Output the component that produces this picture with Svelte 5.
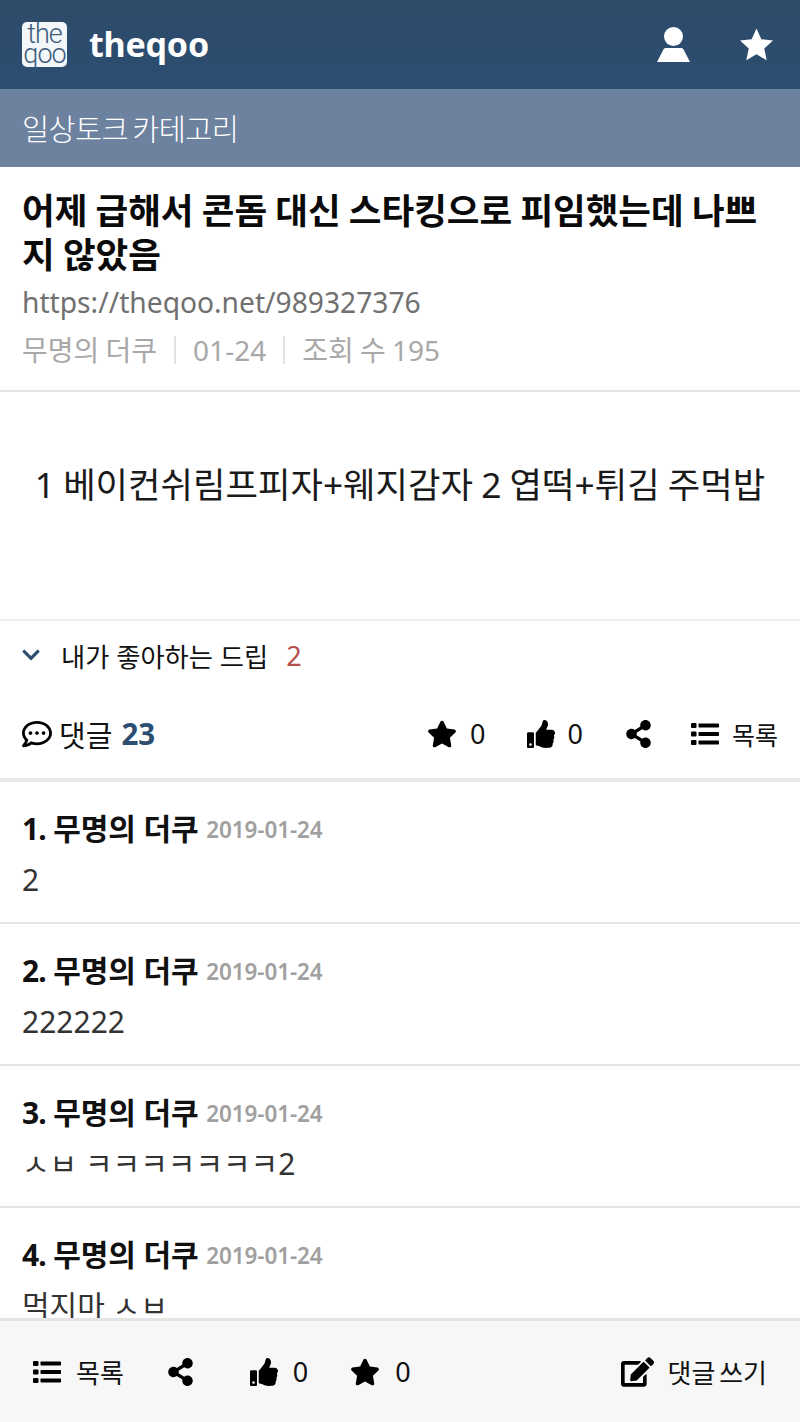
<script>
	const comments = [
		{ no: 1, body: '2' },
		{ no: 2, body: '222222' },
		{ no: 3, body: 'ㅅㅂ ㅋㅋㅋㅋㅋㅋㅋ2' },
		{ no: 4, body: '먹지마 ㅅㅂ' }
	];

	const star = 'M259.3 17.8L194 150.2 47.9 171.5c-26.2 3.8-36.7 36.1-17.7 54.6l105.7 103-25 145.5c-4.5 26.3 23.2 46 46.4 33.7L288 439.6l130.7 68.7c23.2 12.2 50.9-7.4 46.4-33.7l-25-145.5 105.7-103c19-18.5 8.5-50.8-17.7-54.6L382 150.2 316.7 17.8c-11.7-23.6-45.6-23.9-57.4 0z';
	const thumb = 'M104 224H24c-13.255 0-24 10.745-24 24v240c0 13.255 10.745 24 24 24h80c13.255 0 24-10.745 24-24V248c0-13.255-10.745-24-24-24zM64 472c-13.255 0-24-10.745-24-24s10.745-24 24-24 24 10.745 24 24-10.745 24-24 24zM384 81.452c0 42.416-25.97 66.208-33.277 94.548h101.723c33.397 0 59.397 27.746 59.553 58.098.084 17.938-7.546 37.249-19.439 49.197l-.11.11c9.836 23.337 8.237 56.037-9.308 79.469 8.681 25.895-.069 57.704-16.382 74.757 4.298 17.598 2.244 32.575-6.148 44.632C440.202 511.587 389.616 512 346.839 512l-2.845-.001c-48.287-.017-87.806-17.598-119.56-31.725-15.957-7.099-36.821-15.887-52.651-16.178-6.54-.12-11.783-5.457-11.783-11.998v-213.77c0-3.2 1.282-6.271 3.558-8.521 39.614-39.144 56.648-80.587 89.117-113.111 14.804-14.832 20.188-37.236 25.393-58.902C282.515 39.293 291.817 0 312 0c24 0 72 8 72 81.452z';
	const share = 'M352 320c-22.608 0-43.387 7.819-59.79 20.895l-102.486-64.054a96.551 96.551 0 0 0 0-41.683l102.486-64.054C308.613 184.181 329.392 192 352 192c53.019 0 96-42.981 96-96S405.019 0 352 0s-96 42.981-96 96c0 7.158.79 14.13 2.276 20.841L155.79 180.895C139.387 167.819 118.608 160 96 160c-53.019 0-96 42.981-96 96s42.981 96 96 96c22.608 0 43.387-7.819 59.79-20.895l102.486 64.054A96.301 96.301 0 0 0 256 416c0 53.019 42.981 96 96 96s96-42.981 96-96-42.981-96-96-96z';
	const edit = 'M402.6 83.2l90.2 90.2c3.8 3.8 3.8 10 0 13.8L274.4 405.6l-92.8 10.3c-12.4 1.4-22.9-9.1-21.5-21.5l10.3-92.8L388.8 83.2c3.8-3.8 10-3.8 13.8 0zm162-22.9l-48.8-48.8c-15.2-15.2-39.9-15.2-55.2 0l-35.4 35.4c-3.8 3.8-3.8 10 0 13.8l90.2 90.2c3.8 3.8 10 3.8 13.8 0l35.4-35.4c15.2-15.3 15.2-40 0-55.2zM384 346.2V448H64V128h229.8c3.2 0 6.2-1.3 8.5-3.5l40-40c7.6-7.6 2.2-20.5-8.5-20.5H48C21.5 64 0 85.5 0 112v352c0 26.5 21.5 48 48 48h352c26.5 0 48-21.5 48-48V306.2c0-10.7-12.9-16-20.5-8.5l-40 40c-2.2 2.3-3.5 5.3-3.5 8.5z';
	const dots = 'M144 208c-17.7 0-32 14.3-32 32s14.3 32 32 32 32-14.3 32-32-14.3-32-32-32zm112 0c-17.7 0-32 14.3-32 32s14.3 32 32 32 32-14.3 32-32-14.3-32-32-32zm112 0c-17.7 0-32 14.3-32 32s14.3 32 32 32 32-14.3 32-32-14.3-32-32-32zM256 32C114.6 32 0 125.1 0 240c0 47.6 19.9 91.2 52.9 126.3C38 405.7 7 439.1 6.5 439.5c-6.6 7-8.4 17.2-4.6 26S14.4 480 24 480c61.5 0 110-25.7 139.1-46.3C192 442.8 223.2 448 256 448c141.4 0 256-93.1 256-208S397.4 32 256 32zm0 368c-26.7 0-53.1-4.1-78.4-12.1l-22.7-7.2-19.5 13.8c-14.3 10.1-33.9 21.4-57.5 29 7.3-12.1 14.4-25.7 19.9-40.2l10.6-28.1-20.6-21.8C69.7 314.1 48 282.2 48 240c0-88.2 93.3-160 208-160s208 71.8 208 160-93.3 160-208 160z';
	const chevron = 'M207.029 381.476L12.686 187.132c-9.373-9.373-9.373-24.569 0-33.941l22.667-22.667c9.357-9.357 24.522-9.375 33.901-.04L224 284.505l154.745-154.021c9.379-9.335 24.544-9.317 33.901.04l22.667 22.667c9.373 9.373 9.373 24.569 0 33.941L240.971 381.476c-9.373 9.372-24.569 9.372-33.942 0z';
	const rows = [0, 8.5, 17];
</script>

{#snippet listIcon()}
	<svg class="list" viewBox="0 0 28 22">
		{#each rows as y}
			<rect x="0" {y} width="5.500" height="5" rx="1" />
			<rect x="7.500" y={y + 0.5} width="20.500" height="4" rx="0.8" />
		{/each}
	</svg>
{/snippet}

<div class="page">
	<header class="top">
		<div class="brand">
			<div class="logo"><span>the</span><span>qoo</span></div>
			<span class="name">theqoo</span>
		</div>
		<div class="top-icons">
			<svg class="user" viewBox="0 0 33 35"><circle cx="16.500" cy="9.500" r="9.500" /><path d="M9 21h15c1.300 0 2.200.6 2.700 1.800L33 35H0L6.300 22.800C6.800 21.600 7.700 21 9 21z" /></svg>
			<svg class="hstar" viewBox="0 0 34 33"><path d="M17 0l5 11 12 1.500-9 8.200 2.500 12L17 26.500 6.500 32.700 9 20.700 0 12.500 12 11z" /></svg>
		</div>
	</header>
	<div class="category">일상토크 카테고리</div>

	<div class="scroll">
		<section class="head">
			<h1>어제 급해서 콘돔 대신 스타킹으로 피임했는데 나쁘지 않았음</h1>
			<div class="url">https://theqoo.net/989327376</div>
			<div class="meta">
				<span>무명의 더쿠</span>
				<i></i>
				<span>01-24</span>
				<i></i>
				<span>조회 수 195</span>
			</div>
		</section>

		<article class="content">1 베이컨쉬림프피자+웨지감자 2 엽떡+튀김 주먹밥</article>

		<div class="related">
			<svg class="chev" viewBox="0 0 448 512"><path d={chevron} /></svg>
			<span>내가 좋아하는 드립</span>
			<b>2</b>
		</div>

		<div class="actions">
			<div class="count">
				<svg class="ico dots" viewBox="0 0 512 512"><path d={dots} /></svg>
				<span>댓글</span>
				<b>23</b>
			</div>
			<div class="tools">
				<span class="tool"><svg class="ico" viewBox="0 0 576 512"><path d={star} /></svg>0</span>
				<span class="tool t-thumb"><svg class="ico narrow" viewBox="0 0 512 512"><path d={thumb} /></svg>0</span>
				<span class="tool t-share"><svg class="ico share" viewBox="0 0 448 512"><path d={share} /></svg></span>
				<span class="tool t-list">{@render listIcon()}<em>목록</em></span>
			</div>
		</div>

		<ul class="comments">
			{#each comments as c}
				<li>
					<div class="who"><b><span class="no">{c.no}.</span> 무명의 더쿠</b> <time>2019-01-24</time></div>
					<div class="body">{c.body}</div>
				</li>
			{/each}
		</ul>
	</div>

	<footer class="bottom">
		<div class="left">
			<span class="tool">{@render listIcon()}<em>목록</em></span>
			<span class="tool b-share"><svg class="ico share" viewBox="0 0 448 512"><path d={share} /></svg></span>
			<span class="tool b-thumb"><svg class="ico narrow" viewBox="0 0 512 512"><path d={thumb} /></svg>0</span>
			<span class="tool b-star"><svg class="ico" viewBox="0 0 576 512"><path d={star} /></svg>0</span>
		</div>
		<span class="tool write"><svg class="ico pen" viewBox="0 0 576 512"><path d={edit} /></svg><em>댓글 쓰기</em></span>
	</footer>
</div>

<style>
	:global(body) {
		margin: 0;
		background: #fff;
	}

	.page {
		height: 1422px;
		display: flex;
		flex-direction: column;
		overflow: hidden;
		font-family: "Noto Sans", "Noto Sans CJK KR", sans-serif;
		color: #111;
	}

	.top {
		height: 89px;
		flex: none;
		background: linear-gradient(#2e4a68, #2c4e72);
		display: flex;
		align-items: center;
		justify-content: space-between;
		padding: 0 27px 0 22px;
	}

	.brand {
		display: flex;
		align-items: center;
		gap: 22px;
	}

	.logo {
		width: 45px;
		height: 45px;
		box-sizing: border-box;
		padding-top: 2px;
		border-radius: 5px;
		background: #f4f7f9;
		color: #3d5c7c;
		display: flex;
		flex-direction: column;
		align-items: center;
		font-family: "Roboto", sans-serif;
		font-weight: 300;
		font-size: 27px;
		line-height: 20px;
		letter-spacing: -1px;
	}

	.name {
		font-weight: 700;
		font-size: 34px;
		line-height: 45px;
		color: #fff;
		letter-spacing: -0.2px;
	}

	.top-icons {
		display: flex;
		align-items: center;
		gap: 50px;
	}

	.top-icons svg {
		fill: #fff;
		display: block;
	}

	.user {
		width: 33px;
		height: 35px;
	}

	.hstar {
		width: 33px;
		height: 33px;
	}

	.category {
		height: 78px;
		flex: none;
		box-sizing: border-box;
		background: #6d829f;
		color: #fff;
		font-size: 29.500px;
		font-weight: 300;
		line-height: 76px;
		padding: 2px 0 0 22px;
		letter-spacing: -0.6px;
		word-spacing: -3px;
	}

	.scroll {
		flex: 1;
		min-height: 0;
		overflow: hidden;
	}

	.head {
		padding: 21px 22px 20px;
		border-bottom: 2px solid #e5e5e5;
	}

	h1 {
		margin: 0;
		font-size: 35.500px;
		line-height: 44px;
		font-weight: 700;
		color: #0a0a0a;
		word-break: break-all;
		word-spacing: -1px;
	}

	.url {
		font-size: 28.200px;
		line-height: 40px;
		margin-top: 6px;
		color: #707070;
		font-weight: 400;
	}

	.meta {
		display: flex;
		align-items: center;
		gap: 17px;
		margin-top: 8px;
		font-size: 28px;
		line-height: 40px;
		font-weight: 400;
		color: #a8a8a8;
		word-spacing: -1px;
	}

	.meta i {
		width: 2px;
		height: 28px;
		background: #e2e2e2;
	}

	.content {
		height: 229px;
		box-sizing: border-box;
		border-bottom: 2px solid #eee;
		padding-top: 68px;
		text-align: center;
		font-size: 35.300px;
		line-height: 48px;
		font-weight: 400;
		color: #1a1a1a;
		word-spacing: -1px;
	}

	.related {
		height: 70px;
		box-sizing: border-box;
		padding: 0 0 2px 22px;
		display: flex;
		align-items: center;
		font-size: 26.300px;
		font-weight: 400;
	}

	.chev {
		width: 18px;
		height: 20px;
		fill: #2c4e70;
		margin-right: 21px;
	}

	.related b {
		font-weight: 400;
		color: #b5504c;
		margin-left: 18px;
		font-size: 27px;
	}

	.actions {
		height: 91px;
		box-sizing: border-box;
		border-bottom: 4px solid #e8e8e8;
		display: flex;
		align-items: center;
		justify-content: space-between;
		padding: 0 22px 2px;
	}

	.count {
		display: flex;
		align-items: center;
		font-size: 29px;
		font-weight: 400;
	}

	.count b {
		color: #2c4e70;
		font-weight: 700;
		margin-left: 9px;
		font-size: 29.500px;
	}

	.dots {
		margin-right: 7px;
	}

	.tools {
		display: flex;
		align-items: center;
	}

	.tool {
		display: inline-flex;
		align-items: center;
		gap: 13px;
		font-size: 27px;
		font-weight: 400;
	}

	.tool em {
		font-style: normal;
		font-size: 25px;
	}

	.ico {
		width: 30px;
		height: 30px;
		fill: #000;
		flex: none;
	}

	.list {
		width: 28px;
		height: 22px;
		fill: #000;
		flex: none;
	}

	.narrow {
		width: 28px;
		height: 28px;
	}

	.share {
		width: 25px;
		height: 28px;
	}

	.t-thumb {
		margin-left: 41px;
	}

	.t-share {
		margin-left: 43px;
	}

	.t-list {
		margin-left: 40px;
	}

	.comments {
		list-style: none;
		margin: 0;
		padding: 0;
	}

	.comments li {
		height: 142px;
		box-sizing: border-box;
		border-bottom: 2px solid #e5e5e5;
		padding: 25px 22px 0;
	}

	.who {
		line-height: 44px;
		font-size: 30px;
		letter-spacing: -0.1px;
	}

	.who b {
		font-weight: 700;
		color: #111;
	}

	.no {
		letter-spacing: -1px;
	}

	time {
		font-size: 22.500px;
		font-weight: 600;
		color: #a0a0a0;
		vertical-align: 2px;
	}

	.body {
		font-size: 30px;
		line-height: 44px;
		font-weight: 400;
		margin-top: 6px;
		color: #333;
	}

	.bottom {
		height: 104px;
		flex: none;
		box-sizing: border-box;
		background: #f7f7f7;
		border-top: 3px solid #e5e5e5;
		display: flex;
		align-items: center;
		justify-content: space-between;
		padding: 0 33px;
	}

	.left {
		display: flex;
		align-items: center;
	}

	.left .tool {
		gap: 15px;
	}

	.left em {
		font-size: 26px;
	}

	.b-share {
		margin-left: 44px;
	}

	.b-thumb {
		margin-left: 57px;
	}

	.b-star {
		margin-left: 42px;
	}

	.pen {
		width: 33px;
		height: 30px;
	}

	.write {
		gap: 14px;
	}

	.write em {
		font-size: 26px;
		word-spacing: -3px;
	}
</style>
